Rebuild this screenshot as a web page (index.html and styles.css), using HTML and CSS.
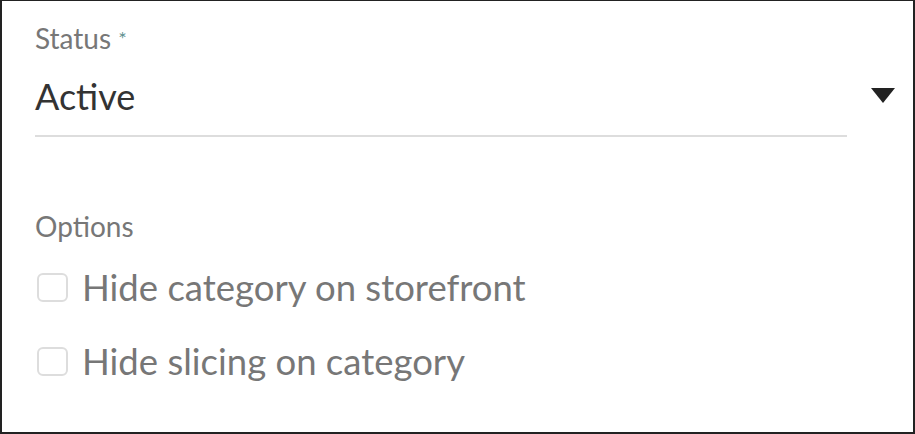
FILE: index.html
```html
<!DOCTYPE html>
<html>
<head>
<meta charset="utf-8">
<link rel="stylesheet" href="styles.css">
</head>
<body>
<div class="frame">
  <div class="field">
    <div class="label">Status <span class="req">*</span></div>
    <div class="select-row">
      <div class="select">Active</div>
      <svg class="caret" width="24" height="15" viewBox="0 0 24 15"><polygon points="0,0 24,0 12,15" fill="#222"/></svg>
    </div>
  </div>
  <div class="options">
    <div class="label options-label">Options</div>
    <label class="check"><span class="box"></span><span class="check-text">Hide category on storefront</span></label>
    <label class="check"><span class="box"></span><span class="check-text">Hide slicing on category</span></label>
  </div>
</div>
</body>
</html>
```
FILE: styles.css
```css
html, body { margin: 0; padding: 0; background: #fff; }
.frame {
  width: 915px;
  height: 434px;
  box-sizing: border-box;
  border: 2px solid #222;
  border-top-width: 1px;
  padding: 20px 0 0 33px;
  font-family: Lato, "Open Sans", "Liberation Sans", sans-serif;
}
.label { font-size: 28px; color: #777; line-height: 34px; }
.req { color: #5f8f8f; font-size: 20px; vertical-align: top; }
.select-row { display: flex; align-items: center; }
.select {
  width: 812px;
  font-size: 36px;
  color: #333;
  line-height: 50px;
  padding: 16px 0 14px;
  border-bottom: 2px solid #ddd;
}
.caret { margin: -2px 0 0 24px; }
.options { margin-top: 72px; }
.options-label { margin-bottom: 7px; }
.check { display: flex; align-items: center; gap: 14px; height: 74px; }
.box {
  width: 27px; height: 25px;
  border: 2px solid #ddd;
  border-radius: 6px;
  margin-left: 2px;
}
.check-text { font-size: 36.5px; color: #777; }
```
